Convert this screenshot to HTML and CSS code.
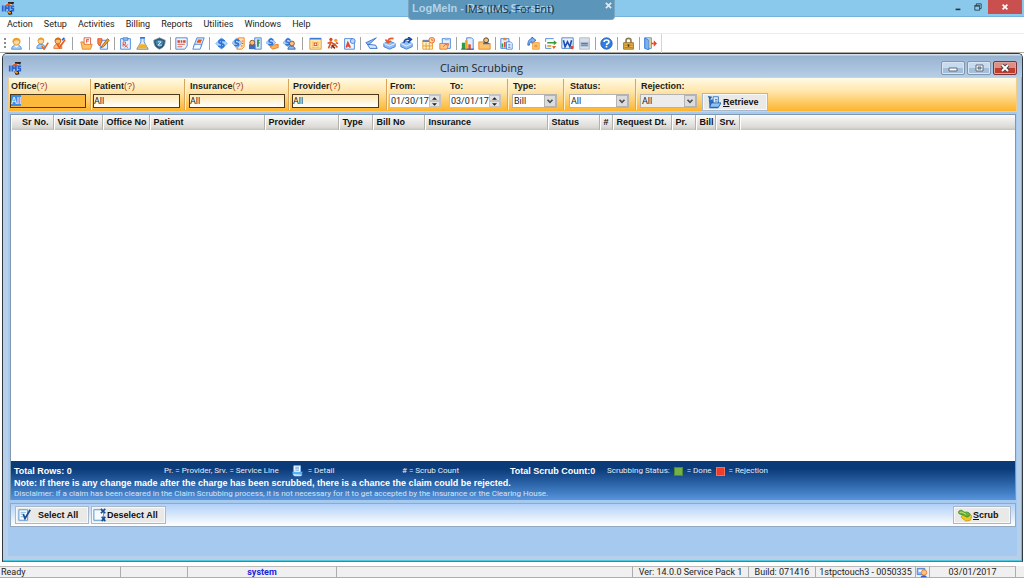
FILE: index.html
```html
<!DOCTYPE html>
<html lang="en">
<head>
<meta charset="utf-8">
<title>IMS - Claim Scrubbing</title>
<link rel="stylesheet" href="styles.css">
</head>
<body>
<svg class="defs" aria-hidden="true">
  <symbol id="ims" viewBox="0 0 16 16"><path d="M5 3h7v3H5z" fill="#f3c9a0"/><path d="M8 1l7 0-1 3-3-1-3 0z" fill="#2b2320"/><path d="M5 5c2-3 6-2 7 1H5z" fill="#e2582b"/><path d="M1 5h2v7H1zM4 5h2l1 3 1-3h2v7H8V9H6v3H4zM11 5h4v2h-2v1h2v4h-4v-2h2v-1h-2z" fill="#2a63cf"/><path d="M7 12l5-1 1 4-4 1z" fill="#2b2320"/><path d="M8 12l3 2" stroke="#f0a020" stroke-width="2"/></symbol>
  <symbol id="person" viewBox="0 0 16 16"><path d="M2 15c0-4 3-5 6-5s6 1 6 5z" fill="#a8d0f8" stroke="#3b82d8"/><path d="M5 10h6l-3 3z" fill="#fff"/><circle cx="8" cy="6" r="4" fill="#fbd9a4" stroke="#d98a1f"/><path d="M3 7c-1-8 11-8 10 0-2-4-7-4-10 0z" fill="#e9a02b"/></symbol>
  <symbol id="person-check" viewBox="0 0 16 16"><path d="M1 14c0-4 2-5 5-5s5 1 5 5z" fill="#a8d0f8" stroke="#3b82d8"/><circle cx="6" cy="5" r="3.500" fill="#fbd9a4" stroke="#d98a1f"/><path d="M2 5c0-6 9-6 8 0-2-2-6-2-8 0z" fill="#e9a02b"/><path d="M7 11l3 4 5-8" fill="none" stroke="#ea6a1b" stroke-width="2"/></symbol>
  <symbol id="person-edit" viewBox="0 0 16 16"><path d="M1 14c0-4 2-5 5-5s5 1 5 5z" fill="#f8c486" stroke="#e2641a"/><circle cx="6" cy="5" r="3.500" fill="#f6bd6a" stroke="#c45a14"/><path d="M2 5c0-6 9-6 8 0-2-2-6-2-8 0z" fill="#da6b16"/><path d="M5 9l3 4 7-10" fill="none" stroke="#ea5a1b" stroke-width="2"/><path d="M11 4l3-3" stroke="#2a63cf" stroke-width="2"/></symbol>
  <symbol id="folder-doc" viewBox="0 0 16 16"><path d="M5 1h8v9H5z" fill="#fff" stroke="#d9442b"/><path d="M8 3h3M8 5h3M8 3v4" stroke="#d9442b"/><path d="M1 6h3l1 3h10l-2 6H3z" fill="#fcc468" stroke="#ea7a1b"/></symbol>
  <symbol id="note-edit" viewBox="0 0 16 16"><path d="M4 4h9v11H4z" fill="#e8f2ff" stroke="#3577d8"/><path d="M1 2h5v4l-3 5-2-3z" fill="#f08a3a" stroke="#e2482b"/><path d="M6 11l7-9 2 2-7 8-3 1z" fill="#f7a92b" stroke="#9c4c12"/></symbol>
  <symbol id="rx" viewBox="0 0 16 16"><path d="M2 2h12v13H2z" fill="#eaf3ff" stroke="#3577d8"/><path d="M5 1h6v3H5z" fill="#9cc3f3" stroke="#3577d8"/><path d="M5 12V6h3v3H5l6 4M11 9l-4 4" fill="none" stroke="#d9442b"/></symbol>
  <symbol id="flask" viewBox="0 0 16 16"><path d="M6 1h4v5l5 9H1l5-9z" fill="#dcebff" stroke="#3577d8"/><path d="M4 9h8l2 5H2z" fill="#f8b11e"/><path d="M5 1h6" stroke="#3577d8" stroke-width="2"/></symbol>
  <symbol id="shield" viewBox="0 0 16 16"><path d="M8 1l7 3c0 6-2 9-7 11C3 13 1 10 1 4z" fill="#2f5067" stroke="#7893a4"/><path d="M8 3l5 2c0 4-2 6-5 8-3-2-5-4-5-8z" fill="#3c86b5"/><path d="M6 6h4L6 10h5" fill="none" stroke="#fff"/></symbol>
  <symbol id="doc" viewBox="0 0 16 16"><path d="M1 1h14v10l-3 4H1z" fill="#edf5ff" stroke="#3577d8"/><path d="M3 4h3v3H3zM7 4h2v3H7zM10 4h3v3h-3z" fill="#d9442b"/><path d="M3 9h9M3 12h6" stroke="#d9442b"/></symbol>
  <symbol id="pages" viewBox="0 0 16 16"><path d="M6 1h9l-4 11H2z" fill="#d8e9ff" stroke="#3577d8"/><path d="M7 4h5M6 6h5" stroke="#ea5a1b" stroke-width="2"/><path d="M3 9h9l-2 6H1z" fill="#f8fbff" stroke="#3577d8"/></symbol>
  <symbol id="dollar" viewBox="0 0 16 16"><path d="M8 1l7 7-7 7-7-7z" fill="#b5d5fa" stroke="#6aa5ee"/><path d="M12 5C8 2 4 4 5 7c2 2 5 0 6 3 0 3-4 3-7 1M8 2v12" fill="none" stroke="#2f74d6" stroke-width="2"/></symbol>
  <symbol id="dollar-doc" viewBox="0 0 16 16"><path d="M8 1h7v11l-3 3H6z" fill="#ffe1b0" stroke="#ea7a1b"/><path d="M12 5h2M12 8h2M11 11h2" stroke="#d9442b"/><path d="M6 1l6 6-6 7-6-7z" fill="#b5d5fa" stroke="#6aa5ee"/><path d="M9 5C6 2 3 4 4 7c2 1 4 0 4 2s-3 2-5 1" fill="none" stroke="#2f74d6" stroke-width="2"/></symbol>
  <symbol id="person-money" viewBox="0 0 16 16"><path d="M7 1h8v14H7z" fill="#d6e8ff" stroke="#3577d8"/><path d="M10 4h3M10 7h3M11 3v9" stroke="#2e9048" stroke-width="2"/><path d="M0 15V9h8v6z" fill="#3d6fc0"/><circle cx="4" cy="7" r="3" fill="#f7c07c" stroke="#8d3d14"/></symbol>
  <symbol id="dollar-hand" viewBox="0 0 16 16"><path d="M6 1l6 6-6 5-6-5z" fill="#b5d5fa" stroke="#6aa5ee"/><path d="M9 4C6 1 3 3 4 6c2 1 4 0 4 2s-3 2-5 1" fill="none" stroke="#2f74d6" stroke-width="2"/><path d="M5 12l4-2 6-1v4l-7 2z" fill="#f9b556" stroke="#ea6a1b"/></symbol>
  <symbol id="dollar-person" viewBox="0 0 16 16"><path d="M6 1l6 6-6 5-6-5z" fill="#b5d5fa" stroke="#6aa5ee"/><path d="M9 4C6 1 3 3 4 6c2 1 4 0 4 2s-3 2-5 1" fill="none" stroke="#2f74d6" stroke-width="2"/><path d="M6 15c0-5 9-5 9 0z" fill="#8cbcf2" stroke="#285ba6"/><circle cx="11" cy="8" r="3" fill="#f7c07c" stroke="#8d3d14"/></symbol>
  <symbol id="calendar" viewBox="0 0 16 16"><path d="M1 2h14v13H1z" fill="#ffe9ae" stroke="#e58a1b"/><path d="M1 1h14v2H1z" fill="#3b7bd8"/><path d="M3 7h10M3 10h10M3 13h10M5 5v9M11 5v9" stroke="#f6be60"/><path d="M6 7h4v4H6z" fill="#d9442b"/><path d="M7 8h2v2H7z" fill="#fff"/></symbol>
  <symbol id="runner" viewBox="0 0 16 16"><circle cx="6" cy="3" r="2" fill="#d9442b"/><circle cx="12" cy="4" r="2" fill="#f2a12b"/><path d="M2 8l4-2 4 3-4 5M6 7l-3 7M10 8l4 5M12 7l3 1" fill="none" stroke="#dd562a" stroke-width="2"/><path d="M7 10l4 4" stroke="#7b2b16" stroke-width="2"/></symbol>
  <symbol id="page-a" viewBox="0 0 16 16"><path d="M2 2h10l2 3v10H2z" fill="#eef5ff" stroke="#3577d8"/><path d="M4 13l2-6 3 6M5 11h3" fill="none" stroke="#e2482b" stroke-width="2"/><circle cx="12" cy="5" r="3" fill="#bcd8fb" stroke="#3577d8"/></symbol>
  <symbol id="scan" viewBox="0 0 16 16"><path d="M14 1L1 7l3 3z" fill="#8fbef4" stroke="#2f70d0"/><path d="M3 9l3 5h9l-2-4z" fill="#d7e9ff" stroke="#1f5dc0"/></symbol>
  <symbol id="box-in" viewBox="0 0 16 16"><path d="M1 8l7-3 7 3v4l-7 3-7-3z" fill="#8fbcf2" stroke="#3577d8"/><path d="M1 8l7 3 7-3" fill="none" stroke="#fff"/><path d="M13 2c-5-1-7 1-7 4M3 3l3 4 4-2" fill="none" stroke="#e9572b" stroke-width="2"/></symbol>
  <symbol id="box-out" viewBox="0 0 16 16"><path d="M1 8l7-3 7 3v4l-7 3-7-3z" fill="#8fbcf2" stroke="#3577d8"/><path d="M1 8l7 3 7-3" fill="none" stroke="#fff"/><path d="M5 7c0-4 3-5 7-4M10 0l4 3-4 4" fill="none" stroke="#174a9d" stroke-width="2"/></symbol>
  <symbol id="sched" viewBox="0 0 16 16"><path d="M1 4h12v11H1z" fill="#fff0c4" stroke="#e8901b"/><path d="M1 4h12v2H1z" fill="#3b7bd8"/><path d="M1 11h12M5 7v8M9 7v8" stroke="#e8901b"/><circle cx="12" cy="4" r="3.500" fill="#ffd7a0" stroke="#e8591b"/><path d="M12 2v2h2" fill="none" stroke="#e8591b"/></symbol>
  <symbol id="clip-open" viewBox="0 0 16 16"><path d="M4 2h10v12H4z" fill="#e6f1ff" stroke="#3577d8"/><path d="M7 1h5v3H7z" fill="#8ab8f0"/><path d="M1 8h11l-2 7H1z" fill="#fcc98a" stroke="#ea6a1b"/><path d="M5 12l3-3 3 1" fill="none" stroke="#d9442b"/></symbol>
  <symbol id="chart" viewBox="0 0 16 16"><path d="M7 1h6l2 2v12H7z" fill="#e3efff" stroke="#3577d8"/><path d="M1 7h4v8H1z" fill="#2d9b47"/><path d="M5 4h3v11H5z" fill="#f2a71e"/><path d="M9 9h3v6H9z" fill="#e2482b"/><path d="M0 15h16" stroke="#244b90"/></symbol>
  <symbol id="folder-person" viewBox="0 0 16 16"><path d="M1 6h6l1 2h7v7H1z" fill="#fcc468" stroke="#ea7a1b"/><path d="M6 9c0-4 8-4 8 0z" fill="#3d6fc0"/><circle cx="10" cy="4" r="3" fill="#f7c07c" stroke="#3a2a22"/></symbol>
  <symbol id="report" viewBox="0 0 16 16"><path d="M1 2h10v12H1z" fill="#e6f1ff" stroke="#3577d8"/><path d="M4 1h4v3H4z" fill="#e8862b"/><path d="M3 8v5" stroke="#2d9b47" stroke-width="2"/><path d="M6 6v7" stroke="#e2482b" stroke-width="2"/><path d="M8 6h5l2 2v7H8z" fill="#fff" stroke="#3577d8"/><path d="M10 9h3M10 11h3M10 13h3" stroke="#3577d8"/></symbol>
  <symbol id="transfer" viewBox="0 0 16 16"><path d="M1 10c0-5 2-8 5-8V0l5 4-5 4V6c-2 0-3 1-3 4z" fill="#7fb2f2" stroke="#1f5dc0"/><path d="M7 7h8v8H7z" fill="#ffd27a" stroke="#ea8a1b"/><path d="M9 10h4M9 12h4" stroke="#ea6a1b"/></symbol>
  <symbol id="sync" viewBox="0 0 16 16"><path d="M2 6V2h10M2 9v5h7" fill="none" stroke="#3577d8"/><path d="M4 6h8V4l4 3-4 3V8H4z" fill="#3a9a3e"/><path d="M10 11h5l-3 4z" fill="#ea6a1b"/><path d="M4 11h5" stroke="#e6a01b" stroke-width="2"/></symbol>
  <symbol id="word" viewBox="0 0 16 16"><path d="M1 1h14v13H1z" fill="#e8f1ff" stroke="#3577d8"/><path d="M3 4l2 8 3-6 3 6 2-8" fill="none" stroke="#1f4eb0" stroke-width="2"/><path d="M12 11h3v4h-3z" fill="#e2482b"/></symbol>
  <symbol id="gray-doc" viewBox="0 0 16 16"><path d="M2 1h12v14H2z" fill="#d8dfe8" stroke="#a7b2c2"/><path d="M3 6h10v6H3z" fill="#a9bbd2"/><path d="M4 8h8M4 10h8" stroke="#4c6c9a"/></symbol>
  <symbol id="help" viewBox="0 0 16 16"><circle cx="8" cy="8" r="7" fill="#2f7fe0" stroke="#1858b4"/><path d="M5 6c0-3 6-3 6 0 0 2-3 2-3 4M8 11v2" fill="none" stroke="#fff" stroke-width="2"/></symbol>
  <symbol id="lock" viewBox="0 0 16 16"><path d="M5 8V4c0-3 6-3 6 0v4" fill="none" stroke="#8c7a55" stroke-width="2"/><path d="M2 7h12v8H2z" fill="#e8b04a" stroke="#86621f"/><path d="M3 10h10M3 13h10" stroke="#b27a18"/><path d="M8 9v3" stroke="#533a10" stroke-width="2"/></symbol>
  <symbol id="exit" viewBox="0 0 16 16"><path d="M1 1h8v13H1z" fill="#dcebff" stroke="#3577d8"/><path d="M1 1l5 3v12l-5-2z" fill="#7db2f0" stroke="#3577d8"/><path d="M6 2h2v10H6z" fill="#f6c02c"/><path d="M9 8h3" stroke="#e2482b" stroke-width="2"/><path d="M12 4l4 4-4 4z" fill="#e2482b"/></symbol>
  <symbol id="retrieve" viewBox="0 0 16 16"><path d="M2 5h5l1 2h5v8H3z" fill="#2a6fc0"/><path d="M7 2h6v8H7z" fill="#eaf4ff" stroke="#2a6fc0"/><path d="M9 5h3M9 7h3" stroke="#2a6fc0"/><path d="M5 9h11l-3 5H3z" fill="#8cc4f5" stroke="#1e5ca8"/><path d="M1 1l5 1-3 4z" fill="#1e5ca8"/></symbol>
  <symbol id="detail" viewBox="0 0 16 16"><path d="M3 1h9v9H3z" fill="#fff" stroke="#8cc0f2"/><path d="M5 3h5M5 5h5M5 7h5" stroke="#4a90dc"/><path d="M1 9h14l-2 5H2z" fill="#5cb0f2"/><path d="M2 12l13 1-3 2H4z" fill="#c6e6ff"/></symbol>
  <symbol id="select" viewBox="0 0 16 16"><path d="M1 2h10v12H1z" fill="#f4faff" stroke="#4a8fce"/><path d="M3 5h6M3 7h4M3 10h3" stroke="#7fb2e0"/><path d="M6 7l2 5 6-10" fill="none" stroke="#164f94" stroke-width="2"/></symbol>
  <symbol id="deselect" viewBox="0 0 16 16"><path d="M1 2h8l3 3v9H1z" fill="#f4faff" stroke="#4a8fce"/><path d="M9 1l5 5M14 1L9 6M10 10l4 5M14 10l-4 5" stroke="#164f94" stroke-width="2"/></symbol>
  <symbol id="scrub" viewBox="0 0 16 16"><path d="M4 9l5-3 7 3-2 5-5 1-5-4z" fill="#f0c822" stroke="#cf9b14"/><path d="M0 5c2-3 4-3 6-1s5-1 8 3l-2 3c-3 1-4-1-6-2S2 8 0 5z" fill="#6cb336" stroke="#3d8a25"/><path d="M2 5c3-1 4 1 7 2" fill="none" stroke="#c8ee8e"/></symbol>
  <symbol id="user-status" viewBox="0 0 16 16"><path d="M1 2h11v9H1z" fill="#8cbcf4" stroke="#2a63cf"/><path d="M3 4h5v3H3z" fill="#fff"/><circle cx="11" cy="8" r="4" fill="#f9c67e" stroke="#e2641a"/><path d="M6 15c0-4 9-4 9 0z" fill="#2a63cf"/></symbol>
</svg>

<div class="app">
  <header class="titlebar">
    <svg class="app-icon"><use href="#ims"/></svg>
    <span class="app-title">IMS (IMS, For Ent)</span>
    <div class="win-controls">
      <button class="win-btn" aria-label="Minimize"><svg viewBox="0 0 10 10"><path d="M2 8h6" stroke="#26333d" stroke-width="2"/></svg></button>
      <button class="win-btn" aria-label="Restore"><svg viewBox="0 0 10 10"><path d="M3 3V1h6v6H7M1 3h6v6H1zM1 4h6" fill="none" stroke="#26333d"/></svg></button>
      <button class="win-btn win-close" aria-label="Close"><svg viewBox="0 0 10 10"><path d="M2 2l6 6M8 2L2 8" stroke="#fff" stroke-width="2"/></svg></button>
    </div>
    <div class="remote-tab"><span>LogMeIn - Remote Session</span><button class="remote-close" aria-label="Close session"><svg viewBox="0 0 8 8"><path d="M1 1l6 6M7 1L1 7" stroke="#dcebf4" stroke-width="2"/></svg></button></div>
  </header>

  <nav class="menubar">
    <button>Action</button><button>Setup</button><button>Activities</button><button>Billing</button><button>Reports</button><button>Utilities</button><button>Windows</button><button>Help</button>
  </nav>

  <div class="toolbar-row">
    <div class="toolbar" role="toolbar" aria-label="Main">
      <span class="grip"></span>
      <button aria-label="Patient"><svg><use href="#person"/></svg></button><i class="sep wide"></i>
      <button aria-label="Check in"><svg><use href="#person-check"/></svg></button>
      <button aria-label="Check out"><svg><use href="#person-edit"/></svg></button><i class="sep wide"></i>
      <button aria-label="Charts"><svg><use href="#folder-doc"/></svg></button>
      <button aria-label="Visit note"><svg><use href="#note-edit"/></svg></button><i class="sep"></i>
      <button aria-label="Prescription"><svg><use href="#rx"/></svg></button>
      <button aria-label="Lab"><svg><use href="#flask"/></svg></button>
      <button aria-label="Immunization"><svg><use href="#shield"/></svg></button><i class="sep"></i>
      <button aria-label="Documents"><svg><use href="#doc"/></svg></button>
      <button aria-label="Forms"><svg><use href="#pages"/></svg></button><i class="sep"></i>
      <button aria-label="Charges"><svg><use href="#dollar"/></svg></button>
      <button aria-label="Billing"><svg><use href="#dollar-doc"/></svg></button>
      <button aria-label="Patient payment"><svg><use href="#person-money"/></svg></button>
      <button aria-label="Payments"><svg><use href="#dollar-hand"/></svg></button>
      <button aria-label="Account"><svg><use href="#dollar-person"/></svg></button><i class="sep wide"></i>
      <button aria-label="Calendar"><svg><use href="#calendar"/></svg></button>
      <button aria-label="Flow"><svg><use href="#runner"/></svg></button>
      <button aria-label="Letters"><svg><use href="#page-a"/></svg></button><i class="sep"></i>
      <button aria-label="Scan"><svg><use href="#scan"/></svg></button>
      <button aria-label="Inbox"><svg><use href="#box-in"/></svg></button>
      <button aria-label="Outbox"><svg><use href="#box-out"/></svg></button><i class="sep"></i>
      <button aria-label="Scheduler"><svg><use href="#sched"/></svg></button>
      <button aria-label="Tasks"><svg><use href="#clip-open"/></svg></button><i class="sep"></i>
      <button aria-label="Statistics"><svg><use href="#chart"/></svg></button>
      <button aria-label="Patient folder"><svg><use href="#folder-person"/></svg></button><i class="sep"></i>
      <button aria-label="Reports"><svg><use href="#report"/></svg></button><i class="sep wide"></i>
      <button aria-label="Transfer"><svg><use href="#transfer"/></svg></button>
      <button aria-label="Synchronize"><svg><use href="#sync"/></svg></button>
      <button aria-label="Word"><svg><use href="#word"/></svg></button>
      <button aria-label="Notes"><svg><use href="#gray-doc"/></svg></button><i class="sep"></i>
      <button aria-label="Help"><svg><use href="#help"/></svg></button><i class="sep"></i>
      <button aria-label="Lock"><svg><use href="#lock"/></svg></button><i class="sep"></i>
      <button aria-label="Exit"><svg><use href="#exit"/></svg></button>
    </div>
  </div>

  <main class="child">
    <div class="child-title">
      <svg class="app-icon"><use href="#ims"/></svg>
      <h1>Claim Scrubbing</h1>
      <div class="child-controls">
        <button aria-label="Minimize window"><svg viewBox="0 0 10 8"><path d="M1 4h8v3H1z" fill="#fff" stroke="#5c6b7c"/></svg></button>
        <button aria-label="Maximize window"><svg viewBox="0 0 10 8"><path d="M2 1h7v6H2z" fill="#fff" stroke="#5c6b7c"/><path d="M4 3h3v2H4z" fill="#9db4cf" stroke="#5c6b7c"/></svg></button>
        <button class="child-close" aria-label="Close window"><svg viewBox="0 0 10 8"><path d="M2 1l6 6M8 1L2 7" stroke="#4d3c48" stroke-width="4"/><path d="M2 1l6 6M8 1L2 7" stroke="#fff" stroke-width="2"/></svg></button>
      </div>
    </div>

    <form class="filters">
      <div class="cell c-office"><label for="office">Office<em>(?)</em></label><input id="office" class="lookup active" value="All"></div>
      <div class="cell c-patient"><label for="patient">Patient<em>(?)</em></label><input id="patient" class="lookup" value="All"></div>
      <div class="cell c-insurance"><label for="insurance">Insurance<em>(?)</em></label><input id="insurance" class="lookup" value="All"></div>
      <div class="cell c-provider"><label for="provider">Provider<em>(?)</em></label><input id="provider" class="lookup" value="All"></div>
      <div class="cell c-dates">
        <div class="field"><label for="from">From:</label><div class="date"><input id="from" value="01/30/17"><span class="spin"><button type="button" aria-label="Later"><svg viewBox="0 0 6 3"><path d="M3 0l3 3H0z"/></svg></button><button type="button" aria-label="Earlier"><svg viewBox="0 0 6 3"><path d="M0 0h6L3 3z"/></svg></button></span></div></div>
        <div class="field"><label for="to">To:</label><div class="date"><input id="to" value="03/01/17"><span class="spin"><button type="button" aria-label="Later"><svg viewBox="0 0 6 3"><path d="M3 0l3 3H0z"/></svg></button><button type="button" aria-label="Earlier"><svg viewBox="0 0 6 3"><path d="M0 0h6L3 3z"/></svg></button></span></div></div>
      </div>
      <div class="cell c-type"><label for="type">Type:</label><div class="drop"><select id="type"><option>Bill</option></select><svg viewBox="0 0 12 11"><path d="M3 4l3 3 3-3" fill="none" stroke="#4a4f57" stroke-width="2"/></svg></div></div>
      <div class="cell c-status"><label for="status">Status:</label><div class="drop"><select id="status"><option>All</option></select><svg viewBox="0 0 12 11"><path d="M3 4l3 3 3-3" fill="none" stroke="#4a4f57" stroke-width="2"/></svg></div></div>
      <div class="cell c-reject"><label for="rejection">Rejection:</label><div class="drop muted"><select id="rejection"><option>All</option></select><svg viewBox="0 0 12 11"><path d="M3 4l3 3 3-3" fill="none" stroke="#4a4f57" stroke-width="2"/></svg></div></div>
      <button type="button" class="btn retrieve"><svg><use href="#retrieve"/></svg><span><u>R</u>etrieve</span></button>
    </form>

    <section class="panel">
      <div class="grid">
        <table>
          <colgroup><col class="w42"><col class="w49"><col class="w47"><col class="w115"><col class="w74"><col class="w34"><col class="w52"><col class="w123"><col class="w52"><col class="w13"><col class="w59"><col class="w24"><col class="w20"><col class="w24"><col></colgroup>
          <thead><tr><th class="num">Sr No.</th><th>Visit Date</th><th>Office No</th><th>Patient</th><th>Provider</th><th>Type</th><th>Bill No</th><th>Insurance</th><th>Status</th><th>#</th><th>Request Dt.</th><th>Pr.</th><th>Bill</th><th>Srv.</th><th></th></tr></thead>
        </table>
      </div>
      <div class="summary">
        <div class="legend">
          <b>Total Rows: 0</b>
          <span class="key">Pr. = Provider, Srv. = Service Line <svg class="detail"><use href="#detail"/></svg> = Detail</span>
          <span># = Scrub Count</span>
          <b>Total Scrub Count:0</b>
          <span class="key">Scrubbing Status: <i class="swatch done"></i> = Done <i class="swatch rejected"></i> = Rejection</span>
        </div>
        <p class="note">Note: If there is any change made after the charge has been scrubbed, there is a chance the claim could be rejected.</p>
        <p class="disclaimer">Disclaimer: If a claim has been cleared in the Claim Scrubbing process, it is not necessary for it to get accepted by the Insurance or the Clearing House.</p>
      </div>
    </section>

    <div class="actions">
      <button class="btn select"><svg><use href="#select"/></svg><span>Select All</span></button>
      <button class="btn deselect"><svg><use href="#deselect"/></svg><span>Deselect All</span></button>
      <button class="btn scrub"><svg><use href="#scrub"/></svg><span><u>S</u>crub</span></button>
    </div>
  </main>

  <footer class="statusbar">
    <span class="s-ready">Ready</span><span class="s-gap"></span><b class="s-user">system</b><span class="s-fill"></span><span class="s-ver">Ver: 14.0.0 Service Pack 1</span><span class="s-build">Build: 071416</span><span class="s-host">1stpctouch3 - 0050335</span><span class="s-icon"><svg><use href="#user-status"/></svg></span><span class="s-date">03/01/2017</span>
  </footer>
</div>
</body>
</html>
```
FILE: styles.css
```css
* { box-sizing: border-box; }
body { margin: 0; font: 9px/12px Roboto, "Liberation Sans", sans-serif; color: #1c1c1c; }
button, input, select { font: inherit; color: inherit; margin: 0; padding: 0; border: 0; background: none; border-radius: 0; }
button { cursor: default; }
svg { display: block; }
.defs { position: absolute; width: 0; height: 0; }
.app { display: flex; flex-direction: column; min-height: 100vh; background: #fff; }

/* Main window title */
.titlebar { position: relative; display: flex; align-items: flex-start; height: 17px; background: #8ac9ec; border-bottom: 1px solid #74b4da; }
.app-icon { width: 14px; height: 14px; flex: none; }
.titlebar .app-icon { margin: 1px 0 0 1px; }
.app-title { position: relative; z-index: 1; flex: 1; text-align: center; padding-left: 56px; font: 11px/18px "Open Sans", sans-serif; color: #1b3243; }
.win-controls { display: flex; }
.win-btn { width: 20px; height: 14px; display: grid; place-items: center; }
.win-btn svg { width: 8px; height: 8px; }
.win-close { width: 34px; margin-right: 2px; background: #c9504e; }
.remote-tab { position: absolute; left: 408px; top: 0; width: 207px; height: 20px; display: flex; justify-content: space-between; padding: 0 2px 0 3px; background: #5b95b9; border: 1px solid #79a5c1; border-top: 0; border-radius: 0 0 4px 4px; font: bold 11px/17px "Liberation Sans", sans-serif; color: #b3d2e5; }
.remote-close { width: 7px; height: 11px; display: grid; place-items: center; }
.remote-close svg { width: 7px; height: 7px; }

/* Menu and toolbar */
.menubar { display: flex; align-items: flex-start; height: 16px; padding-left: 7px; gap: 11px; line-height: 14px; }
.toolbar-row { height: 20px; border-top: 1px solid #ececec; border-bottom: 1px solid #aeaaa4; }
.toolbar { display: flex; align-items: center; justify-content: space-between; width: 662px; height: 19px; padding: 0 1px 0 4px; border-right: 1px solid #d4d4d4; }
.toolbar button { width: 17px; height: 17px; display: grid; place-items: center; }
.toolbar svg { width: 13px; height: 13px; }
.grip { width: 2px; height: 12px; margin-right: 2px; background: repeating-linear-gradient(#8c8c8c 0 2px, #fff 2px 4px); }
.sep { width: 5px; height: 13px; background: linear-gradient(#a2a2a2, #a2a2a2) center / 1px 100% no-repeat; }
.sep.wide { width: 9px; }

/* Child window */
.child { flex: 1; display: flex; flex-direction: column; margin: 0 1px 0 2px; padding: 0 5px 6px; background: #a6c9ef; border: 1px solid #30373d; border-bottom-color: #3f8797; border-radius: 5px 5px 0 0; box-shadow: inset 0 -1px #4fc8e0, inset -1px 0 #4fc8e0, inset 0 0 0 5px #b7cfe9; }
.child-title { display: flex; align-items: center; height: 23px; margin: 0 -5px; padding: 4px 5px 0; background: linear-gradient(#d3e0ee 0 1px, #98b3d1 2px, #b6cde6); border-radius: 4px 4px 0 0; }
.child-title h1 { flex: 1; margin: 0; text-align: center; font: 11px/20px "Open Sans", sans-serif; color: #20262c; }
.child-controls { display: flex; gap: 2px; }
.child-controls button { width: 24px; height: 14px; display: grid; place-items: center; border: 1px solid #7f95b0; border-radius: 2px; background: linear-gradient(#c8daee 0 50%, #a5bfdb 50% 100%); box-shadow: inset 0 0 0 1px #dae6f3; }
.child-controls svg { width: 10px; height: 8px; }
.child-controls .child-close { border-color: #7c3438; background: linear-gradient(#dd8f84 0 50%, #bf3d2d 50% 100%); box-shadow: inset 0 0 0 1px #e0a49c; }

/* Filters */
.filters { display: flex; height: 35px; padding-top: 1px; background: linear-gradient(#fffbe5, #ffe6ac 40%, #fdb42c); border: 1px solid #f3cd87; }
.cell { padding-top: 1px; height: 31px; border-right: 1px solid #d9a55a; box-shadow: 1px 0 #fff2cf; }
.filters label { display: block; height: 14px; padding-left: 1px; font-family: "Liberation Sans", sans-serif; font-weight: 700; line-height: 13px; white-space: nowrap; }
.filters em { font-style: normal; font-weight: 400; color: #a33a22; }
.c-office { width: 82px; padding-left: 1px; }
.c-patient { width: 94px; padding-left: 2px; }
.c-insurance { width: 104px; padding-left: 4px; }
.c-provider { width: 98px; padding-left: 3px; }
.c-dates { display: flex; gap: 8px; width: 121px; padding-left: 2px; }
.c-type { width: 56px; padding-left: 4px; }
.c-status { width: 72px; padding-left: 5px; }
.c-reject { padding: 1px 5px 0 4px; border: 0; box-shadow: none; }
.lookup { display: block; height: 14px; border: 1px solid #4b3a1c; background: linear-gradient(#ffe9b4, #fff6de 60%, #fff); line-height: 12px; }
.c-office .lookup { width: 76px; }
.c-patient .lookup, .c-provider .lookup { width: 87px; }
.c-insurance .lookup { width: 96px; }
.lookup.active { color: #fff; background: linear-gradient(#3a8ee6, #3a8ee6) 0 0 / 10px 11px no-repeat, #fdb93b; }
.date { display: flex; width: 52px; height: 14px; background: #fff; border: 1px solid #c3c3c3; }
.date input { flex: 1; min-width: 0; padding-left: 1px; }
.spin { display: flex; flex-direction: column; width: 11px; background: #e4e4e4; }
.spin button { flex: 1; display: grid; place-items: center; border: 1px solid #c4c4c4; }
.spin svg { width: 5px; height: 3px; fill: #222; }
.drop { position: relative; height: 14px; border: 1px solid #b3b3b3; background: #fff; }
.c-type .drop { width: 45px; }
.c-status .drop { width: 60px; }
.c-reject .drop { width: 57px; }
.drop.muted { background: #ececec; }
.drop select { appearance: none; display: block; width: 100%; height: 12px; padding-left: 1px; }
.drop svg { position: absolute; right: 0; top: 0; width: 12px; height: 12px; background: #dcdcdc; border: 1px solid #b3b3b3; pointer-events: none; }

/* Buttons */
.btn { display: flex; align-items: center; height: 18px; padding: 0 4px; border: 1px solid #a9b9cb; box-shadow: inset 0 0 0 1px #f8f8f8; background: #e9e9e8; font-family: "Liberation Sans", sans-serif; font-weight: 700; color: #111; white-space: nowrap; }
.btn svg { width: 14px; height: 14px; flex: none; }
.retrieve { width: 66px; margin-top: 14px; gap: 2px; }

/* Result grid and summary */
.panel { flex: 1; display: flex; flex-direction: column; margin: 2px 1px 0 2px; border: 1px solid #8097ae; border-bottom: 0; }
.grid { flex: 1; background: #fff; }
table { width: 100%; table-layout: fixed; border-collapse: collapse; }
th { height: 15px; padding: 0 0 0 4px; text-align: left; white-space: nowrap; font-family: "Liberation Sans", sans-serif; line-height: 13px; background: linear-gradient(#fafafa, #dcdad6 80%, #c6c3be); border-right: 1px solid #b4b1ac; box-shadow: inset 1px 0 #fff; color: #111; }
th:last-child { border-right: 0; }
th.num { padding: 0 4px 0 0; text-align: right; }
.w13 { width: 13px; } .w20 { width: 20px; } .w24 { width: 24px; } .w34 { width: 34px; } .w42 { width: 42px; } .w47 { width: 47px; } .w49 { width: 49px; } .w52 { width: 52px; } .w59 { width: 59px; } .w74 { width: 74px; } .w115 { width: 115px; } .w123 { width: 123px; }
.summary { padding: 4px 3px 1px; background: linear-gradient(#0b3a78 20%, #2d66ab 60%, #5794dc); color: #fff; }
.legend { display: grid; grid-template-columns: 150px 238px 108px 97px auto; font-size: 8px; line-height: 12px; white-space: nowrap; color: #e3edf8; }
.legend b { font: bold 9px/12px "Liberation Sans", sans-serif; color: #fff; }
.key { display: flex; align-items: center; gap: 4px; }
.detail { width: 13px; height: 12px; margin-left: 8px; }
.swatch { width: 9px; height: 9px; border: 1px solid #4f8a2e; background: #74b04a; }
.swatch.rejected { border-color: #f0705a; background: #ef3b2a; }
.summary p { margin: 0; white-space: nowrap; }
.note { font: bold 9px/12px "Liberation Sans", sans-serif; }
.disclaimer { font-size: 8px; line-height: 10px; color: #d3e4f7; }

/* Actions */
.actions { display: flex; align-items: center; gap: 2px; height: 24px; margin: 3px 1px 28px 2px; padding: 0 4px; background: linear-gradient(#b0d0f8, #fff); border: 1px solid #93a9c2; }
.select { width: 74px; gap: 6px; padding-left: 2px; }
.deselect { width: 75px; padding: 0 0 0 1px; }
.scrub { width: 58px; margin-left: auto; gap: 1px; }

/* Status bar */
.statusbar { display: flex; height: 15px; padding: 0 8px 0 0; margin-top: 1px; border-top: 3px solid #fff; border-bottom: 1px solid #95b4c8; background: #f0f0f0; line-height: 11px; white-space: nowrap; text-align: center; }
.statusbar > * { border-right: 1px solid #adadad; border-top: 1px solid #b9b9b9; }
.s-ready { width: 121px; padding-left: 1px; text-align: left; }
.s-gap { width: 67px; }
.s-user { width: 149px; color: #1c25e0; }
.s-fill { flex: 1; }
.s-ver { width: 116px; }
.s-build { width: 67px; }
.s-host { width: 100px; }
.s-icon { width: 14px; }
.s-icon svg { width: 12px; height: 11px; }
.s-date { width: 86px; }
```
